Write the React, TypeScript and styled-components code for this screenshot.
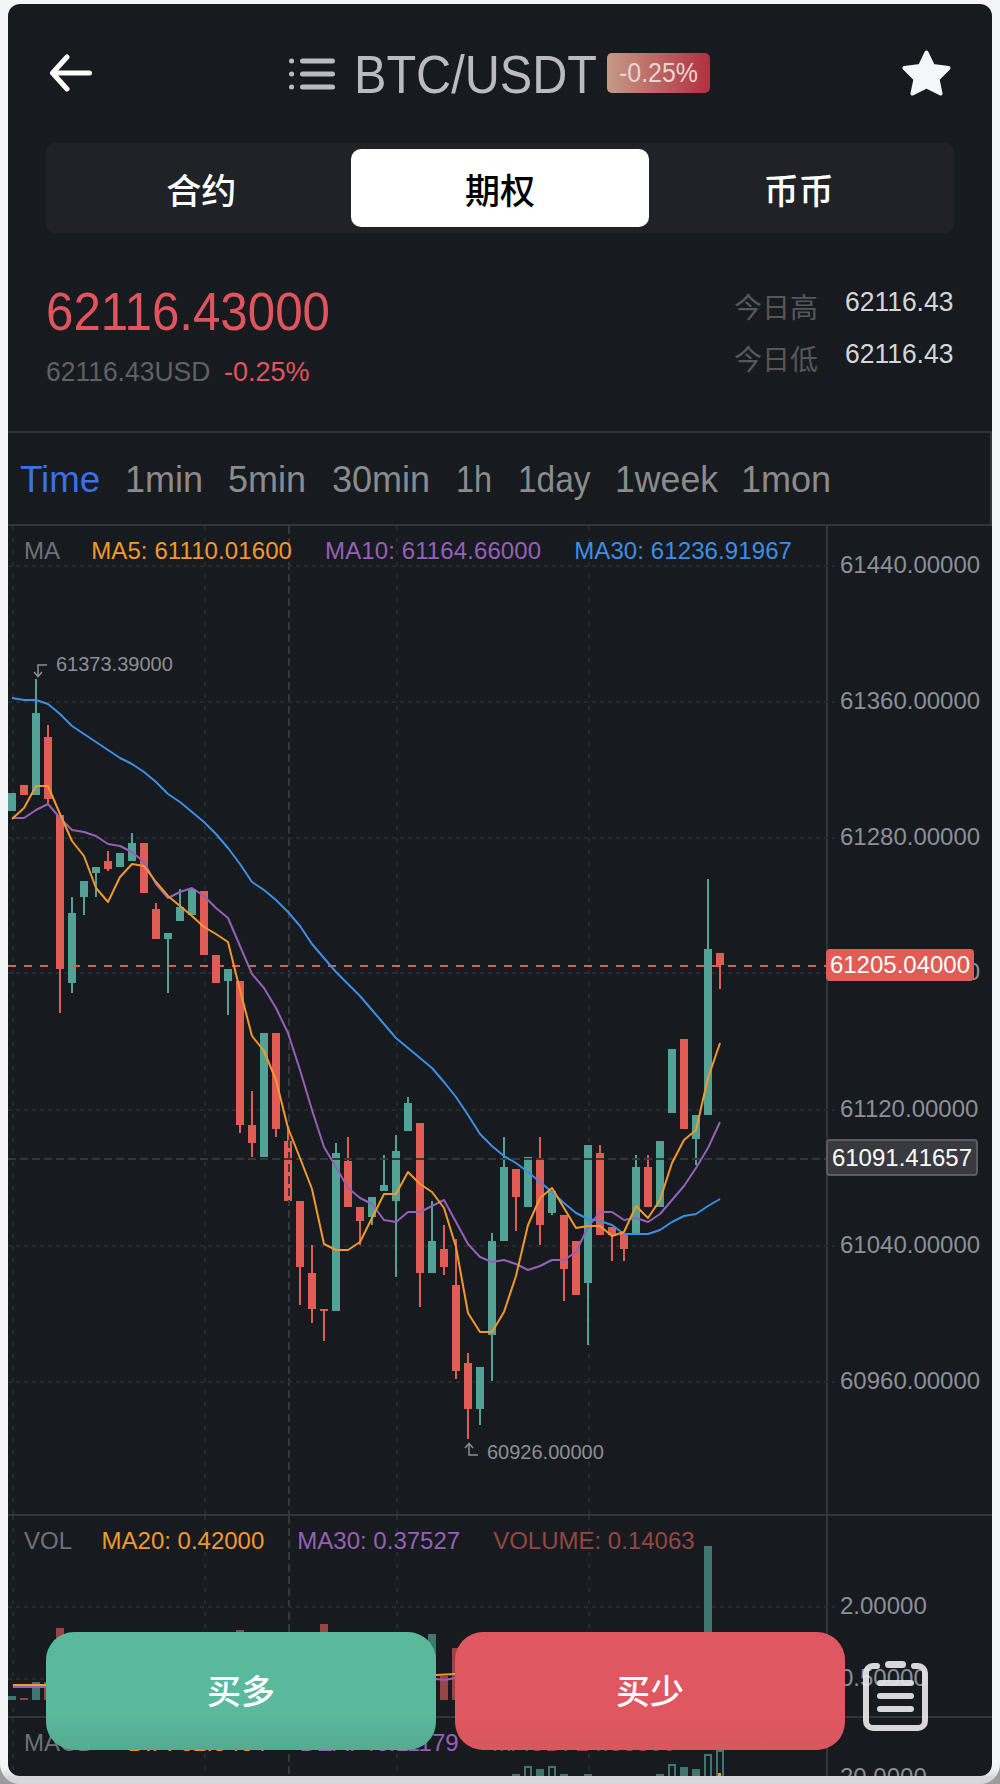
import React from 'react';
import styled, { createGlobalStyle } from 'styled-components';

const GlobalStyle = createGlobalStyle`
  html, body {
    margin: 0;
    padding: 0;
    background: #9c9c9c;
  }
`;

const sans = `"Liberation Sans", "Noto Sans CJK SC", sans-serif`;
const cjk = `"Noto Sans CJK SC", "Liberation Sans", sans-serif`;

const colors = {
  bg: '#171a1f',
  line: '#343538',
  grid: '#292a2d',
  green: '#53a296',
  red: '#e05c54',
  greenDim: '#3f766f',
  redDim: '#964543',
  orange: '#f2992e',
  purple: '#9560b8',
  blue: '#3d8ee4',
  axis: '#8b8f98',
};

const Frame = styled.div`
  width: 1000px;
  height: 1784px;
  box-sizing: border-box;
  padding: 4px 8px 8px;
  border-radius: 0 0 20px 20px;
  background: linear-gradient(#f4f5f7 0, #f4f5f7 1768px, #d6d6d8 1778px);
  overflow: hidden;
`;

const Card = styled.div`
  position: relative;
  height: 1772px;
  background: ${colors.bg};
  border-radius: 12px;
  overflow: hidden;
  display: flex;
  flex-direction: column;
`;

// the reference uses a DIN style face, no condensed family is installed so the sans gets squeezed
const Squeezed = styled.span<{ $width: number; $scale: number }>`
  display: inline-block;
  width: ${props => props.$width}px;
  white-space: nowrap;
  transform-origin: left center;
  transform: scaleX(${props => props.$scale});
`;

const Header = styled.header`
  height: 139px;
  box-sizing: border-box;
  padding: 0 41px 0 42px;
  display: flex;
  align-items: center;
  justify-content: space-between;
`;

const Title = styled.div`
  display: flex;
  align-items: center;
  margin-left: 5px;
`;

const ListIcon = styled.svg`
  margin-top: 2px;
`;

const Pair = styled(Squeezed)`
  margin: 2px 0 0 19px;
  font: 54px/60px ${sans};
  color: #b9bbc1;
`;

const Badge = styled.span`
  margin-left: 13px;
  width: 103px;
  height: 40px;
  border-radius: 5px;
  background: linear-gradient(90deg, #c49a86, #b42e40);
  display: flex;
  justify-content: center;
`;

const BadgeText = styled(Squeezed)`
  color: #e6d5d2;
  font: 28px/40px ${sans};
`;

const Tabs = styled.div`
  margin: 0 38px;
  height: 90px;
  box-sizing: border-box;
  padding: 6px;
  border-radius: 9px;
  background: #212227;
  display: grid;
  grid-template-columns: repeat(3, 1fr);
`;

const Tab = styled.div<{ $active?: boolean }>`
  height: 78px;
  border-radius: 10px;
  background: ${props => (props.$active ? '#ffffff' : 'transparent')};
  color: ${props => (props.$active ? '#000000' : '#ffffff')};
  font: 500 35px/80px ${cjk};
  text-align: center;
`;

const Quote = styled.section`
  height: 198px;
  box-sizing: border-box;
  padding: 48px 39px 0 38px;
  display: flex;
  justify-content: space-between;
`;

const Price = styled(Squeezed)`
  display: block;
  font: 54px/60px ${sans};
  color: #e0545e;
`;

const SubPrice = styled.div`
  margin-top: 14px;
  display: flex;
  gap: 16px;
  font: 28px/34px ${sans};
  color: #5f6167;
`;

const Change = styled(Squeezed)`
  color: #e0545e;
`;

const Stats = styled.div`
  margin-top: 7px;
  display: grid;
  grid-template-columns: auto auto;
  column-gap: 27px;
  row-gap: 16px;
  align-content: start;
`;

const StatLabel = styled.span`
  font: 28px/36px ${cjk};
  color: #55575c;
`;

const StatValue = styled(Squeezed)`
  margin-top: -3px;
  font: 28px/34px ${sans};
  color: #d5d6d8;
`;

const Periods = styled.nav`
  height: 95px;
  box-sizing: border-box;
  padding: 4px 0 0 12px;
  border: solid ${colors.line};
  border-width: 2px 2px 2px 0;
  display: flex;
  align-items: center;
  gap: 26px;
`;

const Period = styled(Squeezed)<{ $active?: boolean }>`
  font: 36px/44px ${sans};
  color: ${props => (props.$active ? '#3d6fe8' : '#8a8b8d')};
`;

const Pane = styled.div<{ $height: number; $divided?: boolean }>`
  position: relative;
  height: ${props => props.$height}px;
  box-sizing: border-box;
  padding: 11px 0 0 16px;
  border-bottom: ${props => (props.$divided ? `2px solid ${colors.line}` : 'none')};
`;

const PaneChart = styled.svg`
  position: absolute;
  left: 0;
  top: 0;
  width: 984px;
  display: block;
`;

const Legend = styled.div<{ $tracking?: number }>`
  position: relative;
  display: flex;
  gap: 33px;
  font: 24px/28px ${sans};
  letter-spacing: ${props => props.$tracking ?? 0}px;
  white-space: nowrap;
`;

const LegendName = styled.span<{ $trim: number }>`
  margin-right: -${props => props.$trim}px;
  color: #6e7178;
`;

const LegendItem = styled.span<{ $color: string }>`
  color: ${props => props.$color};
`;

const AxisLabel = styled.text`
  font: 24px ${sans};
  fill: ${colors.axis};
`;

const MarkLabel = styled.text`
  font: 20px ${sans};
  fill: #8c8f95;
`;

const PriceTag = styled.div<{ $top: number; $variant: 'last' | 'cursor' }>`
  position: absolute;
  left: 818px;
  top: ${props => props.$top}px;
  box-sizing: border-box;
  width: ${props => (props.$variant === 'last' ? 148 : 152)}px;
  height: ${props => (props.$variant === 'last' ? 32 : 37)}px;
  border-radius: 4px;
  border: ${props => (props.$variant === 'cursor' ? '2px solid #5a5c60' : 'none')};
  background: ${props => (props.$variant === 'last' ? colors.red : '#383a40')};
  color: #ffffff;
  font: 24px/${props => (props.$variant === 'last' ? 32 : 33)}px ${sans};
  text-align: center;
`;

const ActionBar = styled.div`
  position: absolute;
  left: 38px;
  top: 1628px;
  display: flex;
  align-items: center;
  gap: 19px;
`;

const ActionButton = styled.button<{ $from: string; $to: string }>`
  width: 390px;
  height: 118px;
  padding: 0 0 2px;
  border: none;
  border-radius: 28px;
  background: linear-gradient(${props => props.$from} 70%, ${props => props.$to});
  color: #ffffff;
  font: 500 34px/1 ${cjk};
`;

const OrdersIcon = styled.svg`
  margin: 10px 0 0 -1px;
  opacity: 0.92;
`;

// [up?, bodyTop, bodyBottom, wickTop, wickBottom] in page pixels, one candle per 12px from x=12
type Candle = [number, number, number, number?, number?];

const candles: Candle[] = [
  [1, 793, 811], [0, 785, 795], [1, 713, 795, 679], [0, 737, 799, 725, 803], [0, 815, 969, 815, 1013],
  [1, 913, 983, 897, 993], [1, 881, 897, 881, 915], [1, 867, 873, 867, 897], [0, 861, 869, 851, 871],
  [1, 853, 867], [1, 843, 861, 833], [0, 843, 893], [0, 909, 939, 903], [1, 933, 939, 933, 993],
  [1, 907, 921, 889], [1, 889, 915], [0, 891, 955], [0, 955, 983], [1, 969, 981, 969, 1015],
  [0, 981, 1125, 981, 1133], [0, 1125, 1143, 1091, 1157], [1, 1033, 1157], [0, 1033, 1129, 1033, 1137],
  [0, 1141, 1201, 1127], [0, 1201, 1267, 1201, 1305], [0, 1273, 1309, 1245, 1323], [0, 1309, 1311, 1309, 1341],
  [1, 1153, 1311, 1143], [0, 1161, 1207, 1137], [0, 1207, 1221, 1207, 1245], [1, 1197, 1217, 1197, 1225],
  [1, 1185, 1191, 1155], [1, 1151, 1201, 1135, 1277], [1, 1103, 1131, 1097], [0, 1123, 1273, 1123, 1307],
  [1, 1241, 1273, 1201], [0, 1249, 1267, 1225, 1275], [0, 1285, 1371, 1239, 1379], [0, 1363, 1409, 1353, 1439],
  [1, 1367, 1409, 1367, 1425], [1, 1241, 1335, 1233, 1381], [1, 1167, 1241, 1137], [0, 1169, 1197, 1169, 1231],
  [1, 1157, 1207], [0, 1160, 1225, 1137, 1245], [1, 1191, 1213, 1191, 1215], [0, 1215, 1269, 1215, 1301],
  [0, 1241, 1295], [1, 1145, 1283, 1145, 1345], [0, 1153, 1235, 1145], [0, 1227, 1235, 1227, 1261],
  [0, 1233, 1249, 1233, 1261], [1, 1167, 1233, 1155], [0, 1167, 1207, 1155], [1, 1141, 1207],
  [1, 1049, 1113], [0, 1039, 1129], [1, 1115, 1139, 1115, 1165], [1, 949, 1115, 879], [0, 953, 965, 953, 989],
];

const ma30 = [698, 700, 700, 704, 714, 726, 734, 742, 750, 758, 764, 772, 782, 794, 802, 812, 822, 834, 848, 864, 882, 890, 900, 912, 926, 944, 958, 972, 984, 996, 1010, 1024, 1038, 1048, 1058, 1068, 1082, 1097, 1115, 1134, 1146, 1156, 1163, 1172, 1182, 1192, 1203, 1213, 1219, 1221, 1225, 1234, 1234, 1234, 1230, 1222, 1216, 1214, 1206, 1199];
const ma10 = [818, 818, 810, 804, 818, 830, 832, 836, 844, 846, 852, 862, 884, 898, 892, 888, 896, 908, 918, 946, 974, 988, 1008, 1033, 1070, 1110, 1147, 1167, 1188, 1198, 1204, 1220, 1222, 1212, 1212, 1206, 1200, 1222, 1244, 1257, 1262, 1260, 1264, 1270, 1266, 1260, 1260, 1252, 1227, 1212, 1212, 1220, 1218, 1222, 1214, 1200, 1186, 1168, 1148, 1122];
const ma5 = [819, 808, 786, 786, 814, 841, 856, 888, 902, 877, 864, 866, 882, 896, 906, 916, 927, 934, 942, 990, 1036, 1051, 1080, 1128, 1158, 1189, 1244, 1250, 1250, 1242, 1218, 1194, 1194, 1172, 1184, 1192, 1208, 1247, 1313, 1332, 1332, 1312, 1276, 1225, 1198, 1188, 1208, 1228, 1226, 1226, 1236, 1232, 1206, 1218, 1200, 1163, 1140, 1130, 1078, 1043];

const toPoints = (ys: number[]) => ys.map((y, i) => `${12 + i * 12},${y}`).join(' ');

const priceGrid = [566, 702, 838, 973, 1110, 1246, 1382];
const priceLabels = ['61440.00000', '61360.00000', '61280.00000', '61200.00000', '61120.00000', '61040.00000', '60960.00000'];

const volumeBars: [number, number, number][] = [
  [12, 1697, 1], [24, 1699, 0], [36, 1683, 1], [48, 1683, 0], [60, 1629, 0], [240, 1631, 0], [324, 1625, 0],
  [432, 1635, 1], [444, 1677, 0], [456, 1649, 0], [708, 1547, 1],
];

// [centre x, top, hollow?]
const macdBars: [number, number, number][] = [
  [516, 1774, 0], [528, 1766, 1], [540, 1769, 0], [552, 1766, 1], [564, 1774, 0], [588, 1774, 0],
  [660, 1774, 0], [672, 1764, 1], [684, 1767, 0], [696, 1769, 0], [708, 1754, 1], [720, 1750, 1],
];

const GridColumns: React.FC<{ top: number; bottom: number }> = ({ top, bottom }) => (
  <g strokeWidth={2} fill="none">
    {[13, 205, 397, 589].map(x => (
      <line key={x} x1={x} x2={x} y1={top} y2={bottom} stroke={colors.grid} strokeDasharray="4 8" />
    ))}
    <line x1={289} x2={289} y1={top} y2={bottom} stroke="#36373a" strokeDasharray="8 4" />
    <line x1={827} x2={827} y1={top} y2={bottom} stroke={colors.line} />
  </g>
);

const GridRow: React.FC<{ y: number }> = ({ y }) => (
  <line x1={8} x2={835} y1={y} y2={y} stroke={colors.grid} strokeWidth={2} strokeDasharray="4 4" />
);

const MainChart: React.FC = () => (
  <PaneChart height={989} viewBox="8 526 984 989">
    <GridColumns top={526} bottom={1515} />
    {priceGrid.map(y => <GridRow key={y} y={y} />)}
    {priceLabels.map((label, i) => (
      <AxisLabel key={label} x={840} y={priceGrid[i] + 7}>{label}</AxisLabel>
    ))}
    {candles.map(([up, top, bottom, wickTop, wickBottom], i) => {
      const x = 12 + i * 12;
      const fill = up ? colors.green : colors.red;
      return (
        <g key={x} fill={fill}>
          <rect x={x - 1} y={wickTop ?? top} width={2} height={(wickBottom ?? bottom) - (wickTop ?? top)} />
          <rect x={x - 4} y={top} width={8} height={bottom - top} />
        </g>
      );
    })}
    <line x1={8} x2={827} y1={966} y2={966} stroke={colors.red} strokeWidth={2} strokeDasharray="8 8" />
    <line x1={8} x2={827} y1={1159} y2={1159} stroke="#36373a" strokeWidth={2} strokeDasharray="8 4" />
    <line x1={289} x2={289} y1={1140} y2={1202} stroke="#36373a" strokeWidth={2} strokeDasharray="8 4" />
    <g fill="none" strokeWidth={2} strokeLinejoin="round">
      <polyline points={toPoints(ma30)} stroke={colors.blue} />
      <polyline points={toPoints(ma10)} stroke={colors.purple} />
      <polyline points={toPoints(ma5)} stroke={colors.orange} />
    </g>
    <g fill="none" stroke="#8c8f95" strokeWidth={1.5}>
      <polyline points="47,665 38,665 38,675" />
      <polyline points="34,672 38,676.5 42,672" />
      <polyline points="478,1455 469,1455 469,1444" />
      <polyline points="465,1448 469,1443.5 473,1448" />
    </g>
    <MarkLabel x={56} y={671}>61373.39000</MarkLabel>
    <MarkLabel x={487} y={1459}>60926.00000</MarkLabel>
  </PaneChart>
);

const VolumeChart: React.FC = () => (
  <PaneChart height={200} viewBox="8 1517 984 200">
    <GridColumns top={1517} bottom={1717} />
    <GridRow y={1608} />
    <GridRow y={1680} />
    <AxisLabel x={840} y={1615}>2.00000</AxisLabel>
    <AxisLabel x={840} y={1687}>0.50000</AxisLabel>
    {volumeBars.map(([x, top, up]) => (
      <rect key={x} x={x - 4} y={top} width={8} height={1701 - top} fill={up ? colors.greenDim : colors.redDim} />
    ))}
    <g fill="none" strokeWidth={2}>
      <polyline points="13,1688 46,1688 436,1680 445,1681 455,1679" stroke={colors.purple} />
      <polyline points="13,1686 46,1686 436,1676 455,1675" stroke={colors.orange} />
    </g>
  </PaneChart>
);

const MacdChart: React.FC = () => (
  <PaneChart height={58} viewBox="8 1718 984 58">
    <GridColumns top={1718} bottom={1776} />
    <AxisLabel x={840} y={1785}>20.0000</AxisLabel>
    {macdBars.map(([x, top, hollow]) =>
      hollow ? (
        <rect key={x} x={x - 3} y={top + 1} width={6} height={1780 - top} fill="none" stroke={colors.greenDim} strokeWidth={2} />
      ) : (
        <rect key={x} x={x - 4} y={top} width={8} height={1780 - top} fill={colors.greenDim} />
      ),
    )}
    <rect x={718} y={1773} width={3} height={3} fill={colors.orange} />
  </PaneChart>
);

const periods = [
  { label: 'Time', width: 79, scale: 1.02 },
  { label: '1min', width: 77, scale: 1 },
  { label: '5min', width: 78, scale: 1 },
  { label: '30min', width: 98, scale: 1 },
  { label: '1h', width: 36, scale: 0.9 },
  { label: '1day', width: 71, scale: 0.93 },
  { label: '1week', width: 100, scale: 0.99 },
  { label: '1mon', width: 86, scale: 1 },
];

const App: React.FC = () => (
  <>
    <GlobalStyle />
    <Frame>
      <Card>
        <Header>
          <svg width="42" height="38" viewBox="0 0 42 38" fill="none" stroke="#ffffff" strokeWidth={5} strokeLinecap="round" strokeLinejoin="round">
            <path d="M39.5 19H3M17 3 2.5 19 17 35" />
          </svg>
          <Title>
            <ListIcon width="46" height="34" viewBox="0 0 46 34" fill="none" stroke="#b9bbc1" strokeWidth={5} strokeLinecap="round">
              <path d="M13.5 4H43.5M13.5 17H43.5M13.5 30H43.5" />
              <path d="M2.5 4h.1M2.5 17h.1M2.5 30h.1" />
            </ListIcon>
            <Pair $width={240} $scale={0.9}>BTC/USDT</Pair>
            <Badge>
              <BadgeText $width={79} $scale={0.89}>-0.25%</BadgeText>
            </Badge>
          </Title>
          <svg width="49" height="46" viewBox="0 0 49 46" fill="#f5f6fa" stroke="#f5f6fa" strokeWidth={4} strokeLinejoin="round">
            <path d="M24.5 2.5 31 16 46.5 18 35.5 29 38.5 43.5 24.5 36.5 10.5 43.5 13.5 29 2.5 18 18 16Z" />
          </svg>
        </Header>
        <Tabs>
          <Tab>合约</Tab>
          <Tab $active>期权</Tab>
          <Tab>币币</Tab>
        </Tabs>
        <Quote>
          <div>
            <Price $width={284} $scale={0.912}>62116.43000</Price>
            <SubPrice>
              <Squeezed $width={162} $scale={0.945}>62116.43USD</Squeezed>
              <Change $width={85} $scale={0.965}>-0.25%</Change>
            </SubPrice>
          </div>
          <Stats>
            <StatLabel>今日高</StatLabel>
            <StatValue $width={108} $scale={0.945}>62116.43</StatValue>
            <StatLabel>今日低</StatLabel>
            <StatValue $width={108} $scale={0.945}>62116.43</StatValue>
          </Stats>
        </Quote>
        <Periods>
          {periods.map((item, i) => (
            <Period key={item.label} $width={item.width} $scale={item.scale} $active={i === 0}>
              {item.label}
            </Period>
          ))}
        </Periods>
        <Pane $height={991} $divided>
          <MainChart />
          <Legend $tracking={0.1}>
            <LegendName $trim={2}>MA</LegendName>
            <LegendItem $color={colors.orange}>MA5: 61110.01600</LegendItem>
            <LegendItem $color={colors.purple}>MA10: 61164.66000</LegendItem>
            <LegendItem $color={colors.blue}>MA30: 61236.91967</LegendItem>
          </Legend>
          <PriceTag $variant="last" $top={423}>61205.04000</PriceTag>
          <PriceTag $variant="cursor" $top={613}>61091.41657</PriceTag>
        </Pane>
        <Pane $height={202} $divided>
          <VolumeChart />
          <Legend>
            <LegendName $trim={3.5}>VOL</LegendName>
            <LegendItem $color={colors.orange}>MA20: 0.42000</LegendItem>
            <LegendItem $color={colors.purple}>MA30: 0.37527</LegendItem>
            <LegendItem $color={colors.redDim}>VOLUME: 0.14063</LegendItem>
          </Legend>
        </Pane>
        <Pane $height={58}>
          <MacdChart />
          <Legend>
            <LegendName $trim={0}>MACD</LegendName>
            <LegendItem $color={colors.orange}>DIF: 62.5464</LegendItem>
            <LegendItem $color={colors.purple}>DEA: 46.11179</LegendItem>
            <LegendItem $color={colors.redDim}>MACD: 24.86300</LegendItem>
          </Legend>
        </Pane>
        <ActionBar>
          <ActionButton $from="#5ab89b" $to="#54ab91">买多</ActionButton>
          <ActionButton $from="#df5761" $to="#d9565f">买少</ActionButton>
          <OrdersIcon width="65" height="70" viewBox="0 0 65 70" fill="none" stroke="#e8e8e8" strokeWidth={6} strokeLinecap="round">
            <path d="M14 5H10a7 7 0 0 0-7 7V60a7 7 0 0 0 7 7H55a7 7 0 0 0 7-7V12a7 7 0 0 0-7-7H51" />
            <path d="M25.5 3.5H39.5" strokeWidth={7} />
            <path d="M17 22H48M17 35H48M17 48H48" />
          </OrdersIcon>
        </ActionBar>
      </Card>
    </Frame>
  </>
);

export default App;
